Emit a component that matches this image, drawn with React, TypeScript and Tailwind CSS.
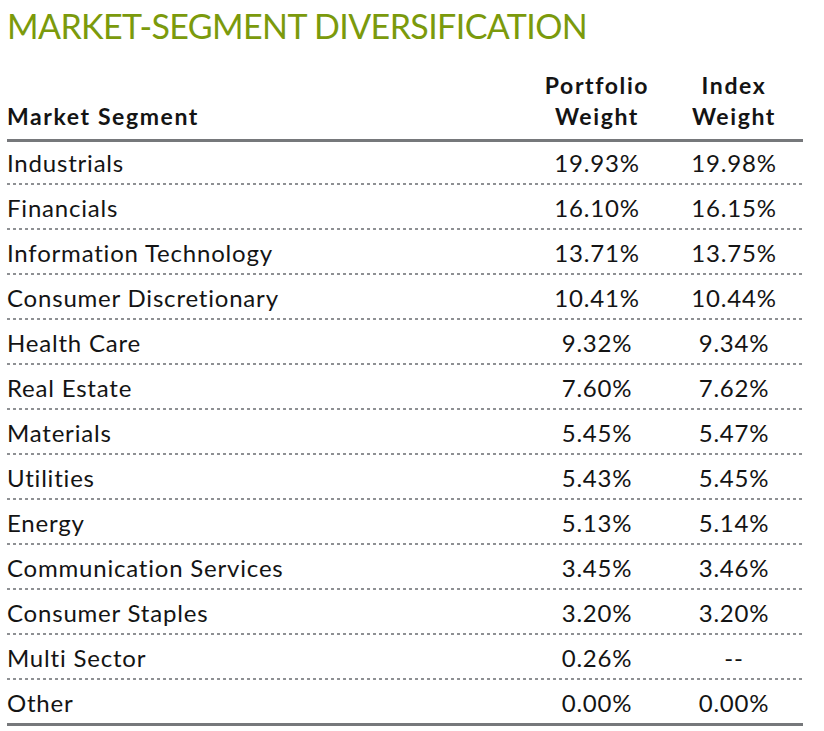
import React from 'react';

interface SegmentRow {
  name: string;
  portfolio: string;
  index: string;
}

const rows: SegmentRow[] = [
  { name: 'Industrials', portfolio: '19.93%', index: '19.98%' },
  { name: 'Financials', portfolio: '16.10%', index: '16.15%' },
  { name: 'Information Technology', portfolio: '13.71%', index: '13.75%' },
  { name: 'Consumer Discretionary', portfolio: '10.41%', index: '10.44%' },
  { name: 'Health Care', portfolio: '9.32%', index: '9.34%' },
  { name: 'Real Estate', portfolio: '7.60%', index: '7.62%' },
  { name: 'Materials', portfolio: '5.45%', index: '5.47%' },
  { name: 'Utilities', portfolio: '5.43%', index: '5.45%' },
  { name: 'Energy', portfolio: '5.13%', index: '5.14%' },
  { name: 'Communication Services', portfolio: '3.45%', index: '3.46%' },
  { name: 'Consumer Staples', portfolio: '3.20%', index: '3.20%' },
  { name: 'Multi Sector', portfolio: '0.26%', index: '--' },
  { name: 'Other', portfolio: '0.00%', index: '0.00%' },
];

// dotted rule between rows
const Dots = () => (
  <div className="h-[2px] w-full bg-[repeating-linear-gradient(90deg,#8e9093_0px,#8e9093_3px,transparent_3px,transparent_6px)]" />
);

export default function App() {
  return (
    <div className="w-[824px] h-[731px] bg-white font-['Lato',sans-serif] text-[#141414]">
      <div className="ml-[7px] w-[796px]">
        <h1 className="pt-[6px] text-[34px] leading-[40px] font-normal tracking-[-0.6px] text-[#7b9a0c]">
          MARKET-SEGMENT DIVERSIFICATION
        </h1>

        <div className="mt-[24px] grid grid-cols-[1fr_136px_138px] items-end border-b-[3px] border-[#76787b] pb-[7px] text-[23px] leading-[31px] font-bold tracking-[1.6px]">
          <div>Market Segment</div>
          <div className="text-center">
            Portfolio
            <br />
            Weight
          </div>
          <div className="text-center">
            Index
            <br />
            Weight
          </div>
        </div>

        <div className="border-b-[3px] border-[#76787b]">
          {rows.map((row, i) => (
            <div key={row.name}>
              <div
                className={
                  i === 0
                    ? 'grid h-[41px] grid-cols-[1fr_136px_138px] items-center text-[24px] tracking-[0.8px]'
                    : 'grid h-[43px] grid-cols-[1fr_136px_138px] items-center pt-[2px] text-[24px] tracking-[0.8px]'
                }
              >
                <div>{row.name}</div>
                <div className="text-center">{row.portfolio}</div>
                <div className="text-center">{row.index}</div>
              </div>
              {i < rows.length - 1 && <Dots />}
            </div>
          ))}
        </div>
      </div>
    </div>
  );
}
